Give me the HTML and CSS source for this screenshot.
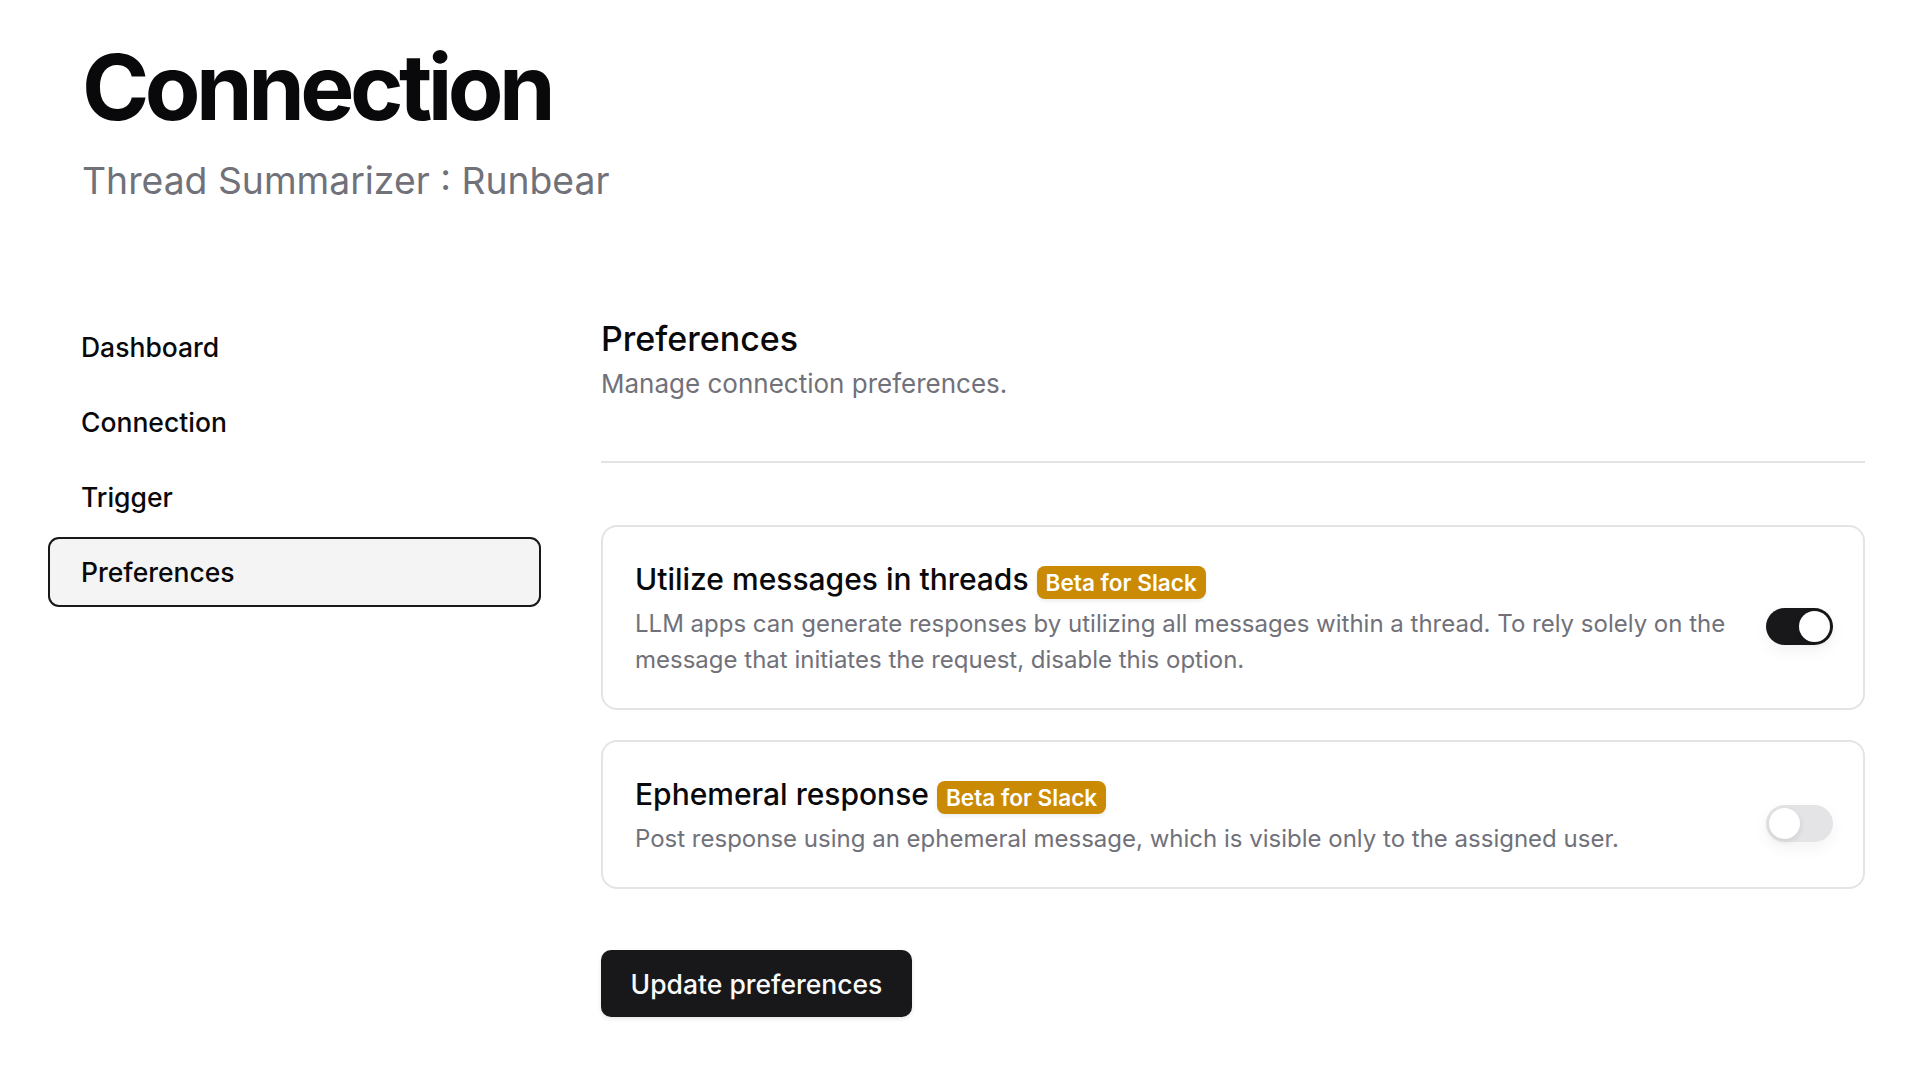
FILE: index.html
```html
<!DOCTYPE html>
<html lang="en">
<head>
<meta charset="utf-8">
<title>Connection</title>
<link rel="stylesheet" href="styles.css">
</head>
<body>
<div class="page">
  <header class="header">
    <h1 class="title">Connection</h1>
    <p class="subtitle">Thread Summarizer : Runbear</p>
  </header>
  <div class="layout">
    <aside class="sidebar">
      <nav class="nav">
        <a class="nav-item">Dashboard</a>
        <a class="nav-item">Connection</a>
        <a class="nav-item">Trigger</a>
        <a class="nav-item active">Preferences</a>
      </nav>
    </aside>
    <main class="main">
      <h2 class="section-title">Preferences</h2>
      <p class="section-desc">Manage connection preferences.</p>
      <div class="separator"></div>
      <div class="cards">
        <div class="card">
          <div class="card-text">
            <div class="card-title-row">
              <span class="card-title">Utilize messages in threads</span>
              <span class="badge">Beta for Slack</span>
            </div>
            <p class="card-desc">LLM apps can generate responses by utilizing all messages within a thread. To rely solely on the message that initiates the request, disable this option.</p>
          </div>
          <div class="switch on"><span class="knob"></span></div>
        </div>
        <div class="card">
          <div class="card-text">
            <div class="card-title-row">
              <span class="card-title">Ephemeral response</span>
              <span class="badge">Beta for Slack</span>
            </div>
            <p class="card-desc">Post response using an ephemeral message, which is visible only to the assigned user.</p>
          </div>
          <div class="switch off"><span class="knob"></span></div>
        </div>
      </div>
      <button class="btn">Update preferences</button>
    </main>
  </div>
</div>
</body>
</html>
```

FILE: styles.css
```css
* { box-sizing: border-box; }
html, body { margin: 0; padding: 0; background: #ffffff; }
body {
  font-family: Inter, "Noto Sans", "Liberation Sans", sans-serif;
  color: #09090b;
}
.page {
  padding: 42px 55px 40px 82px;
}
.header { display: flex; flex-direction: column; }
.title {
  margin: 0;
  font-size: 91px;
  line-height: 1;
  font-weight: 700;
  letter-spacing: -0.05em;
  color: #09090b;
}
.subtitle {
  margin: 21.5px 0 0 0;
  font-size: 37.3px;
  line-height: 1.4;
  color: #71717a;
  font-weight: 400;
}
.layout {
  display: flex;
  flex-direction: row;
  gap: 60px;
  margin-top: 105px;
}
.sidebar {
  width: 493px;
  flex: none;
  margin-left: -34px;
}
.nav { display: flex; flex-direction: column; gap: 5px; }
.nav-item {
  display: flex;
  align-items: center;
  height: 70px;
  padding-left: 31px;
  border: 2px solid transparent;
  border-radius: 11px;
  font-size: 26.5px;
  font-weight: 500;
  color: #09090b;
}
.nav-item.active {
  background: #f4f4f5;
  border-color: #18181b;
}
.main { flex: 1; min-width: 0; }
.section-title {
  margin: 3px 0 0 0;
  font-size: 34px;
  line-height: 1.4;
  font-weight: 500;
}
.section-desc {
  margin: 2px 0 0 0;
  font-size: 26px;
  line-height: 1.5;
  color: #71717a;
}
.separator {
  height: 2px;
  background: #e4e4e7;
  margin-top: 58px;
}
.cards {
  display: flex;
  flex-direction: column;
  gap: 30px;
  margin-top: 62px;
}
.card {
  display: flex;
  align-items: center;
  justify-content: space-between;
  gap: 32px;
  border: 2px solid #e4e4e7;
  border-radius: 16px;
  padding: 31px 30px 30px 32px;
}
.card-text { flex: 1; min-width: 0; }
.card-title-row {
  display: flex;
  align-items: center;
  gap: 8px;
  height: 42px;
}
.card-title {
  font-size: 30px;
  font-weight: 500;
  line-height: 1.4;
}
.badge {
  display: inline-flex;
  align-items: center;
  height: 33px;
  margin-top: 6px;
  padding: 0 9px;
  border-radius: 8px;
  background: #ca8a04;
  color: #ffffff;
  font-size: 22.6px;
  font-weight: 600;
  box-shadow: 0 2px 4px rgba(0,0,0,0.08);
}
.card-desc {
  margin: 6px 0 0 0;
  font-size: 24px;
  line-height: 36px;
  color: #71717a;
}
.switch {
  flex: none;
  width: 67px;
  height: 37px;
  margin-top: 16px;
  border-radius: 999px;
  padding: 3px;
  display: flex;
  align-items: center;
  box-shadow: 0 6px 16px rgba(0,0,0,0.05);
}
.switch.on { background: #18181b; justify-content: flex-end; }
.switch.off { background: #e4e4e7; justify-content: flex-start; }
.knob {
  width: 31px;
  height: 31px;
  border-radius: 50%;
  background: #ffffff;
  box-shadow: 0 2px 6px rgba(0,0,0,0.1);
}
.btn {
  margin-top: 61px;
  height: 67px;
  width: 311px;
  border: none;
  border-radius: 10px;
  background: #18181b;
  color: #fafafa;
  font-family: inherit;
  font-size: 26.5px;
  font-weight: 500;
  box-shadow: 0 2px 4px rgba(0,0,0,0.1);
}
```
